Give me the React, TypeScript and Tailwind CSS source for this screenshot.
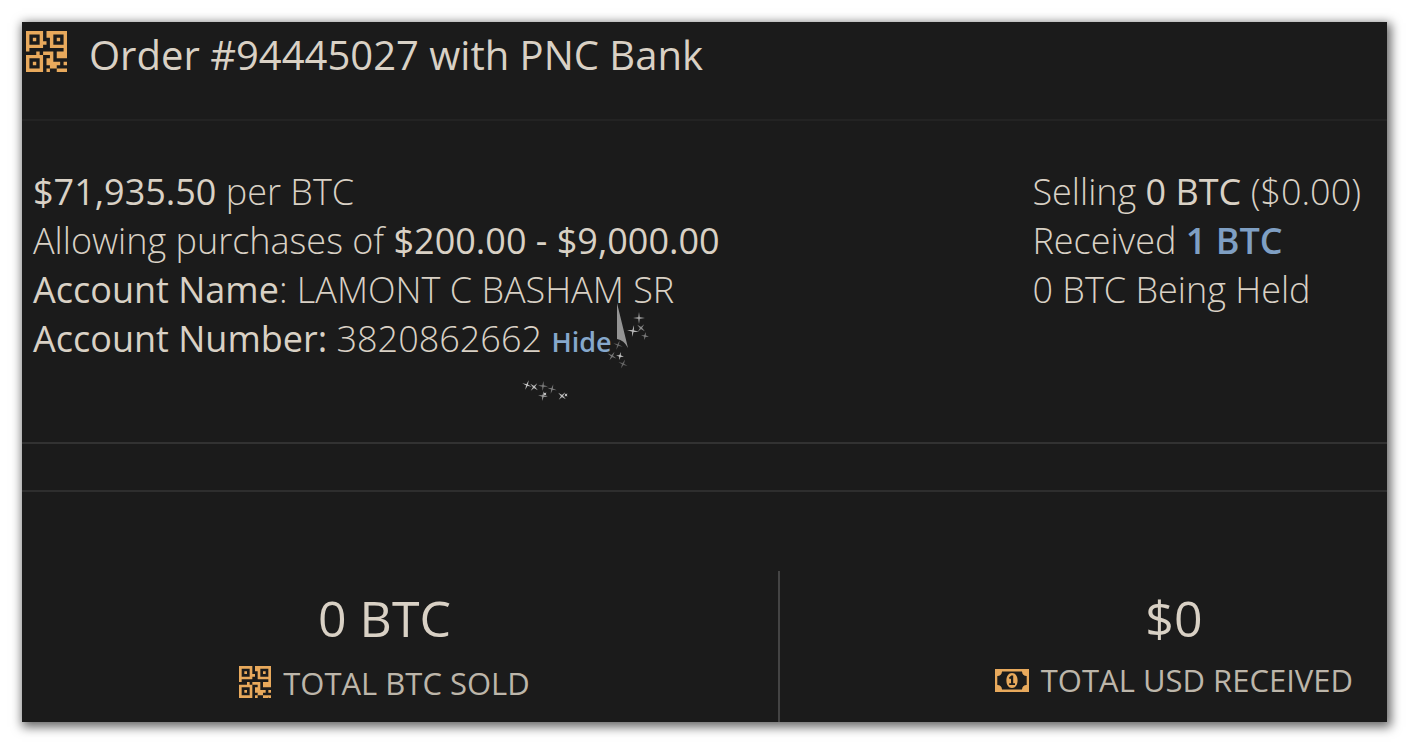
const QR_ROWS = [
  '#####.######',
  '#...#.##...#',
  '#.#.#..#.#.#',
  '#...##.#...#',
  '#####..#####',
  '#..........#',
  '...#.###.###',
  '#####..#.###',
  '#...#.##....',
  '#.#.#.####.#',
  '#...#..##...',
  '#####.#..###',
];

const QR_PATH = QR_ROWS.flatMap((row, y) =>
  [...row].map((cell, x) => (cell === '#' ? `M${x} ${y}h1v1h-1z` : '')),
).join('');

function QrIcon({ className }: { className: string }) {
  return (
    <svg viewBox="0 0 12 12" className={className} fill="currentColor" aria-hidden="true">
      <path d={QR_PATH} />
    </svg>
  );
}

function BillIcon({ className }: { className: string }) {
  return (
    <svg viewBox="0 0 34 23" className={className} fill="currentColor" aria-hidden="true">
      <path
        fillRule="evenodd"
        d="M0 0H34V23H0ZM7 2.5A4.8 4.8 0 0 1 2.3 7V16A4.8 4.8 0 0 1 7 20.5H27A4.8 4.8 0 0 1 31.7 16V7A4.8 4.8 0 0 1 27 2.5Z"
      />
      <path
        fillRule="evenodd"
        d="M17 4C20.5 4 22.6 7.2 22.6 11.5S20.5 19 17 19S11.4 15.8 11.4 11.5S13.5 4 17 4ZM16.3 6.5L13.8 8.7L15 10.2L16 9.4V14.2H14.2V16H20V14.2H18.2V6.5Z"
      />
    </svg>
  );
}

/* x, y, radius, rotation, opacity */
const STARS = [
  [27, 96, 5, 20, 0.8], [34, 98, 5, 40, 0.8], [43, 97, 5, 5, 0.45], [52, 100, 5, 15, 0.45],
  [43, 107, 5, 10, 0.6], [45, 105, 2, 45, 0.8], [62, 107, 5, 40, 0.8], [66, 106, 2, 45, 0.8],
  [139, 29, 6, 0, 0.65], [133, 42, 6, 10, 0.75], [141, 39, 5, 40, 0.55], [145, 47, 4, 10, 0.45],
  [118, 56, 5, 20, 0.35], [112, 67, 5, 30, 0.45], [120, 67, 4, 10, 0.8], [123, 75, 5, 25, 0.35],
];

function Sparkles() {
  return (
    <svg
      viewBox="0 0 160 120"
      className="pointer-events-none absolute top-full left-full -mt-[74px] -ml-[112px] h-[120px] w-[160px]"
      aria-hidden="true"
    >
      <path d="M117 14L128 59Q124 51 117 50Z" fill="#949494" />
      {STARS.map(([x, y, r, angle, opacity]) => (
        <g key={`${x}-${y}`} transform={`translate(${x} ${y}) rotate(${angle})`} opacity={opacity} fill="#e6e6e6">
          <path d={`M${-r} 0L0 -0.9L${r} 0L0 0.9ZM0 ${-r}L0.9 0L0 ${r}L-0.9 0Z`} />
          <circle r="1" />
        </g>
      ))}
    </svg>
  );
}

export default function App() {
  return (
    <div className="bg-white p-[22px] font-['Open_Sans','Noto_Sans',sans-serif] text-[#d9d1c5]">
      <main className="bg-[#1b1b1b] shadow-[2px_3px_10px_2px_rgba(0,0,0,0.6)]">
        <header className="flex h-[99px] items-start gap-[22px] border-b-2 border-[#232323] px-1 pt-1">
          <QrIcon className="mt-[5px] size-[41px] shrink-0 text-[#e8a95c]" />
          <h1 className="text-[40px] leading-[58px]">Order #94445027 with PNC Bank</h1>
        </header>

        <section className="flex justify-between border-b-2 border-[#323232] px-[11px] pt-[46px] pb-[79px] text-[36px] leading-[49px] font-light">
          <div>
            <p><strong className="font-medium">$71,935.50</strong> per BTC</p>
            <p>Allowing purchases of <strong className="font-medium">$200.00 - $9,000.00</strong></p>
            <p><strong className="font-medium">Account Name</strong>: LAMONT C BASHAM SR</p>
            <p>
              <strong className="font-medium">Account Number:</strong> 3820862662{' '}
              <span className="relative">
                <button type="button" className="text-[27px] leading-8 font-semibold text-[#86a8cc]">Hide</button>
                <Sparkles />
              </span>
            </p>
          </div>
          <div className="pr-[15px]">
            <p>Selling <strong className="font-medium">0 BTC</strong> ($0.00)</p>
            <p>Received <a href="#received" className="font-semibold text-[#7f9fc3]">1 BTC</a></p>
            <p>0 BTC Being Held</p>
          </div>
        </section>

        <div className="h-[48px] border-b-2 border-[#2e2e2e]" />

        <section className="flex pt-[79px]">
          <div className="flex h-[151px] grow flex-col items-center border-r-2 border-[#444444] pt-[13px] pr-[31px]">
            <p className="text-[50px] leading-[68px]">0 BTC</p>
            <p className="mt-[9px] flex items-center gap-3 text-[31px] leading-[44px] text-[#bdb6aa]">
              <QrIcon className="mb-[2px] size-8 text-[#e8a95c]" />
              TOTAL BTC SOLD
            </p>
          </div>
          <div className="flex h-[151px] w-[607px] flex-col items-end pt-[13px] pr-[34px]">
            <div className="flex flex-col items-center">
              <p className="text-[50px] leading-[68px]">$0</p>
              <p className="mt-[6px] flex items-center gap-3 text-[31px] leading-[44px] text-[#bdb6aa]">
                <BillIcon className="h-[23px] w-[34px] text-[#e8a95c]" />
                TOTAL USD RECEIVED
              </p>
            </div>
          </div>
        </section>
      </main>
    </div>
  );
}
